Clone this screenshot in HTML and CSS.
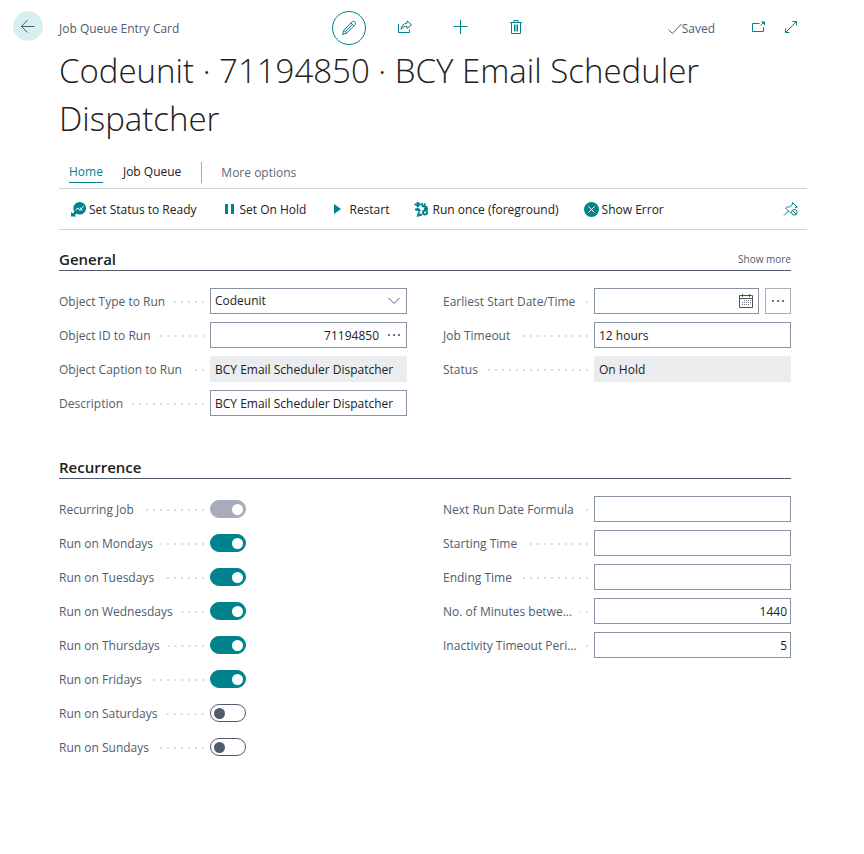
FILE: index.html
```html
<!DOCTYPE html>
<html lang="en">
<head>
  <meta charset="UTF-8" />
  <meta name="viewport" content="width=device-width, initial-scale=1.0"/>
  <title>Job Queue Entry Card</title>
  <link rel="stylesheet" href="styles.css">
</head>
<body>

<div class="page">
  <div class="side">
    <button class="back" type="button" aria-label="Back">
      <svg width="16" height="16" viewBox="0 0 16 16"><path d="M14.5 8.5H1.5M7.5 2L1.5 8.5L7.5 14.5"/></svg>
    </button>
  </div>

  <main class="main">
    <header class="topbar">
      <span class="caption">Job Queue Entry Card</span>
      <div class="tools">
        <button class="tool active" type="button" aria-label="Edit">
          <svg width="16" height="16" viewBox="0 0 16 16"><path d="M1.5 14.5L2.8 10.3L10.8 2C11.8 1 13 1.1 13.8 1.9C14.7 2.8 14.8 4 13.8 5L5.6 13.2ZM2.8 10.3L5.6 13.2M9.8 3L12.8 6M4.3 11.7L11.2 4.6"/></svg>
        </button>
        <button class="tool" type="button" aria-label="Share">
          <svg width="16" height="16" viewBox="0 0 16 16"><path d="M1.5 4V12.5H12.5V9.5M10 1L14.5 4.8L10 8.5V6.3C7.5 6.2 5.6 7 4.2 9.3C4.5 5.8 6.5 3.5 10 3.2Z"/></svg>
        </button>
        <button class="tool" type="button" aria-label="New">
          <svg width="16" height="16" viewBox="0 0 16 16"><path d="M7.5 0V14M0.5 6.5H14.5"/></svg>
        </button>
        <button class="tool" type="button" aria-label="Delete">
          <svg width="16" height="16" viewBox="0 0 16 16"><path d="M1 2.5H13M5 2.5V0.5H9V2.5M2.5 3V13.5H11.5V3M5.5 4.5V11.5M7 4.5V11.5M8.5 4.5V11.5"/></svg>
        </button>
      </div>
      <div class="status">
        <span class="saved"><svg width="14" height="12" viewBox="0 0 14 12"><path d="M0.5 6.5L4.5 10.5L13.5 1"/></svg>Saved</span>
        <button class="window-btn" type="button" aria-label="Open in new window">
          <svg width="16" height="16" viewBox="0 0 16 16"><path d="M9.5 3.5H2.5V11.5H13.5V7M10.5 5.5L14 2"/><path class="fill" d="M11 1.5H15V5.5Z"/></svg>
        </button>
        <button class="window-btn" type="button" aria-label="Expand">
          <svg width="16" height="16" viewBox="0 0 16 16"><path d="M2.5 12.5L13.5 1.5M9.5 1.5H13.5V5.5M2.5 8.5V12.5H6.5"/></svg>
        </button>
      </div>
    </header>

    <h1>Codeunit · 71194850 · BCY Email Scheduler Dispatcher</h1>

    <nav class="tabs">
      <a class="tab current" href="#home">Home</a>
      <a class="tab" href="#queue">Job Queue</a>
      <a class="tab more" href="#more">More options</a>
    </nav>

    <div class="actions">
      <button class="action" type="button">
        <svg width="16" height="16" viewBox="0 0 16 16"><circle class="fill" cx="8.7" cy="6.3" r="6.3"/><path class="cut" d="M4.5 8L7 6L9 8.5L12.5 4M9 5.5L11.5 8.5"/><path class="fill" d="M0 14.5V10L1.7 11.4L4.2 9L6.3 11L3.8 13L5.3 14.5Z"/></svg>
        Set Status to Ready
      </button>
      <button class="action" type="button">
        <svg width="16" height="16" viewBox="0 0 16 16"><path class="fill" d="M3 2H6V12H3ZM9 2H12V12H9Z"/></svg>
        Set On Hold
      </button>
      <button class="action" type="button">
        <svg width="16" height="16" viewBox="0 0 16 16"><path class="fill" d="M3 2L10 7L3 12Z"/></svg>
        Restart
      </button>
      <button class="action" type="button">
        <svg width="16" height="16" viewBox="0 0 16 16"><path class="heavy" d="M0.5 2.5H5.5M3 0L5.5 2.5L3 5M7.5 1L9 5M9 4L13.5 5.5M11 1.5L10.5 4M1 7.5H5L6 9.5M3.5 6V9M5 10L4 13.5L8 12.5M10 7H14"/><circle class="heavy" cx="11" cy="10.5" r="2"/></svg>
        Run once (foreground)
      </button>
      <button class="action" type="button">
        <svg width="16" height="16" viewBox="0 0 16 16"><circle class="fill" cx="7.5" cy="7.5" r="7.5"/><path class="cut" d="M4.5 4.5L10.5 10.5M10.5 4.5L4.5 10.5"/></svg>
        Show Error
      </button>
      <button class="pin" type="button" aria-label="Unpin">
        <svg width="16" height="16" viewBox="0 0 16 16"><path d="M1 14.5L5.5 10M7.5 12L2.5 7C4 5.8 5.3 5.8 6.5 6L9.3 3.6L9.5 1.5L14.2 6.2L12 6.8"/><circle cx="11.3" cy="11.3" r="2.8"/><path d="M9.4 9.4L13.2 13.2"/></svg>
      </button>
    </div>

    <section class="group">
      <div class="group-head">
        <h2>General</h2>
        <a class="show-more" href="#general">Show more</a>
      </div>
      <div class="columns">
        <div class="column">
          <div class="field">
            <label for="object-type">Object Type to Run</label>
            <div class="box">
              <select id="object-type"><option>Codeunit</option></select>
              <svg class="chevron" width="12" height="8" viewBox="0 0 12 8"><path d="M0.5 1L6 6.5L11.5 1"/></svg>
            </div>
          </div>
          <div class="field">
            <label for="object-id">Object ID to Run</label>
            <div class="box">
              <input class="number" type="text" id="object-id" value="71194850">
              <button class="lookup" type="button" aria-label="Look up object">
                <svg width="12" height="4" viewBox="0 0 12 4"><path class="dot" d="M0 1H2V3H0ZM5 1H7V3H5ZM10 1H12V3H10Z"/></svg>
              </button>
            </div>
          </div>
          <div class="field">
            <label for="object-caption">Object Caption to Run</label>
            <div class="box readonly"><input type="text" id="object-caption" value="BCY Email Scheduler Dispatcher" readonly></div>
          </div>
          <div class="field">
            <label for="description">Description</label>
            <div class="box"><input type="text" id="description" value="BCY Email Scheduler Dispatcher"></div>
          </div>
        </div>
        <div class="column">
          <div class="field">
            <label for="earliest-start">Earliest Start Date/Time</label>
            <div class="pair">
              <div class="box">
                <input type="text" id="earliest-start">
                <button class="calendar" type="button" aria-label="Pick a date">
                  <svg width="16" height="14" viewBox="0 0 16 14"><path d="M1.5 1.5H14.5V13.5H1.5ZM1 4.5H15M4.5 0V3M11.5 0V3"/><path class="dot" d="M6 6H7V7H6ZM8 6H9V7H8ZM10 6H11V7H10ZM12 6H13V7H12ZM4 8H5V9H4ZM6 8H7V9H6ZM8 8H9V9H8ZM10 8H11V9H10ZM12 8H13V9H12ZM4 10H5V11H4ZM6 10H7V11H6ZM8 10H9V11H8ZM10 10H11V11H10Z"/></svg>
                </button>
              </div>
              <button class="assist" type="button" aria-label="Edit date and time">
                <svg width="12" height="4" viewBox="0 0 12 4"><path class="dot" d="M0 1H2V3H0ZM5 1H7V3H5ZM10 1H12V3H10Z"/></svg>
              </button>
            </div>
          </div>
          <div class="field">
            <label for="job-timeout">Job Timeout</label>
            <div class="box"><input type="text" id="job-timeout" value="12 hours"></div>
          </div>
          <div class="field">
            <label for="job-status">Status</label>
            <div class="box readonly"><input type="text" id="job-status" value="On Hold" readonly></div>
          </div>
        </div>
      </div>
    </section>

    <section class="group">
      <div class="group-head">
        <h2>Recurrence</h2>
      </div>
      <div class="columns">
        <div class="column">
          <div class="field">
            <label for="recurring">Recurring Job</label>
            <input class="toggle" type="checkbox" id="recurring" checked disabled>
          </div>
          <div class="field">
            <label for="mon">Run on Mondays</label>
            <input class="toggle" type="checkbox" id="mon" checked>
          </div>
          <div class="field">
            <label for="tue">Run on Tuesdays</label>
            <input class="toggle" type="checkbox" id="tue" checked>
          </div>
          <div class="field">
            <label for="wed">Run on Wednesdays</label>
            <input class="toggle" type="checkbox" id="wed" checked>
          </div>
          <div class="field">
            <label for="thu">Run on Thursdays</label>
            <input class="toggle" type="checkbox" id="thu" checked>
          </div>
          <div class="field">
            <label for="fri">Run on Fridays</label>
            <input class="toggle" type="checkbox" id="fri" checked>
          </div>
          <div class="field">
            <label for="sat">Run on Saturdays</label>
            <input class="toggle" type="checkbox" id="sat">
          </div>
          <div class="field">
            <label for="sun">Run on Sundays</label>
            <input class="toggle" type="checkbox" id="sun">
          </div>
        </div>
        <div class="column">
          <div class="field">
            <label for="next-run">Next Run Date Formula</label>
            <div class="box"><input type="text" id="next-run"></div>
          </div>
          <div class="field">
            <label for="starting">Starting Time</label>
            <div class="box"><input type="text" id="starting"></div>
          </div>
          <div class="field">
            <label for="ending">Ending Time</label>
            <div class="box"><input type="text" id="ending"></div>
          </div>
          <div class="field">
            <label for="minutes">No. of Minutes betwe...</label>
            <div class="box"><input class="number" type="text" id="minutes" value="1440"></div>
          </div>
          <div class="field">
            <label for="inactivity">Inactivity Timeout Peri...</label>
            <div class="box"><input class="number" type="text" id="inactivity" value="5"></div>
          </div>
        </div>
      </div>
    </section>
  </main>
</div>

</body>
</html>
```
FILE: styles.css
```css
* { box-sizing: border-box; }

body {
  margin: 0;
  font-family: "Segoe UI", "Open Sans", "Noto Sans", sans-serif;
  font-size: 12px;
  line-height: 20px;
  color: #212121;
  background: #fff;
}

button, input, select {
  font: inherit;
  color: inherit;
  margin: 0;
  padding: 0;
  border: none;
  background: none;
}

button { cursor: pointer; }
a { color: inherit; text-decoration: none; }

svg {
  display: block;
  flex: none;
  fill: none;
  stroke: #00838c;
}

.fill { fill: #00838c; stroke: none; }
.cut { stroke: #fff; }
.heavy { stroke-width: 2; }
.dot { fill: #6b7584; stroke: none; }

.page {
  display: flex;
  padding-right: 57px;
}

.side {
  flex: 0 0 59px;
  padding: 11px 0 0 13px;
}

.back {
  display: flex;
  align-items: center;
  justify-content: center;
  width: 30px;
  height: 30px;
  border-radius: 50%;
  background: #d8eff1;
}

.back svg { stroke: #505c6d; }

.main {
  flex: 1;
  min-width: 0;
}

/* top bar */
.topbar {
  display: grid;
  grid-template-columns: 1fr auto 1fr;
  align-items: center;
  padding-top: 11px;
  color: #505c6d;
}

.caption { padding-top: 2px; }

.tools {
  display: flex;
  gap: 22px;
}

.tool {
  display: flex;
  align-items: center;
  justify-content: center;
  width: 34px;
  height: 34px;
  border-radius: 50%;
}

.tool.active { border: 1px solid #00838c; }

.status {
  display: flex;
  align-items: center;
  justify-content: flex-end;
}

.saved {
  display: flex;
  align-items: center;
  margin-right: 26px;
  padding-top: 2px;
}

.saved svg { stroke: #505c6d; }

.window-btn {
  display: flex;
  justify-content: center;
  width: 33px;
}

h1 {
  margin: 2px 0 0;
  font-size: 33px;
  line-height: 48px;
  font-weight: 300;
}

/* tabs and actions */
.tabs {
  display: flex;
  align-items: center;
  gap: 20px;
  padding: 18px 10px 5px;
  border-bottom: 1px solid #d0d2d4;
}

.tab {
  padding-top: 1px;
  border-bottom: 1px solid transparent;
}

.tab.current {
  color: #00838c;
  border-color: #00838c;
}

.tab.more {
  color: #60697a;
  border-bottom: none;
  border-left: 1px solid #a6acb8;
  padding-left: 19px;
}

.actions {
  display: flex;
  align-items: center;
  gap: 25px;
  height: 41px;
  padding: 0 8px 0 12px;
  border-bottom: 1px solid #d0d2d4;
}

.action {
  display: flex;
  align-items: center;
  gap: 2px;
  padding-top: 2px;
  white-space: nowrap;
}

.pin { margin-left: auto; }

/* field groups */
.group {
  margin-right: 16px;
  padding-top: 17px;
}

.group + .group { padding-top: 39px; }

.group-head {
  display: flex;
  align-items: center;
  justify-content: space-between;
  height: 24px;
  border-bottom: 1px solid #505c6d;
}

h2 {
  margin: 0;
  font-size: 15px;
  font-weight: 600;
}

.show-more {
  font-size: 10px;
  color: #505c6d;
}

.columns {
  display: grid;
  grid-template-columns: 1fr 1fr;
  gap: 36px;
  padding-top: 17px;
}

.column {
  display: flex;
  flex-direction: column;
  gap: 8px;
}

.field {
  display: grid;
  grid-template-columns: 145px 1fr;
  align-items: center;
  gap: 6px;
  height: 26px;
}

.field label {
  display: flex;
  align-items: center;
  gap: 8px;
  padding-top: 2px;
  color: #505c6d;
  white-space: nowrap;
}

/* dotted leader between the label and its value */
.field label::after {
  content: "";
  flex: 1;
  height: 2px;
  background: linear-gradient(90deg, transparent 5px, #d6d9dd 5px) right / 7px 2px repeat-x;
}

.box {
  position: relative;
  display: flex;
  align-items: center;
  flex: 1;
  min-width: 0;
  height: 26px;
  border: 1px solid #8992a2;
}

.box input, .box select {
  flex: 1;
  width: 100%;
  min-width: 0;
  height: 24px;
  padding: 0 4px;
  appearance: none;
}

.box .number {
  padding: 0 3px;
  text-align: right;
}

.box.readonly {
  border-color: #ebecee;
  background: #ebecee;
}

.chevron {
  position: absolute;
  right: 6px;
  pointer-events: none;
  stroke: #505c6d;
}

.lookup { padding: 0 6px; }
.calendar { padding: 0 4px; }
.calendar svg { stroke: #505050; }

.pair {
  display: flex;
  gap: 6px;
}

.assist {
  display: flex;
  align-items: center;
  justify-content: center;
  width: 26px;
  border: 1px solid #b0b0b0;
}

.toggle {
  appearance: none;
  display: flex;
  align-items: center;
  width: 36px;
  height: 18px;
  padding: 0 3px;
  border: 1px solid #505c6d;
  border-radius: 9px;
  cursor: pointer;
}

.toggle::before {
  content: "";
  width: 11px;
  height: 11px;
  border-radius: 50%;
  background: #505c6d;
}

.toggle:checked {
  justify-content: flex-end;
  padding: 0 2px;
  border-color: #00838c;
  background: #00838c;
}

.toggle:checked::before { background: #fff; }

.toggle:disabled {
  border-color: #a6acb8;
  background: #a6acb8;
}
```
